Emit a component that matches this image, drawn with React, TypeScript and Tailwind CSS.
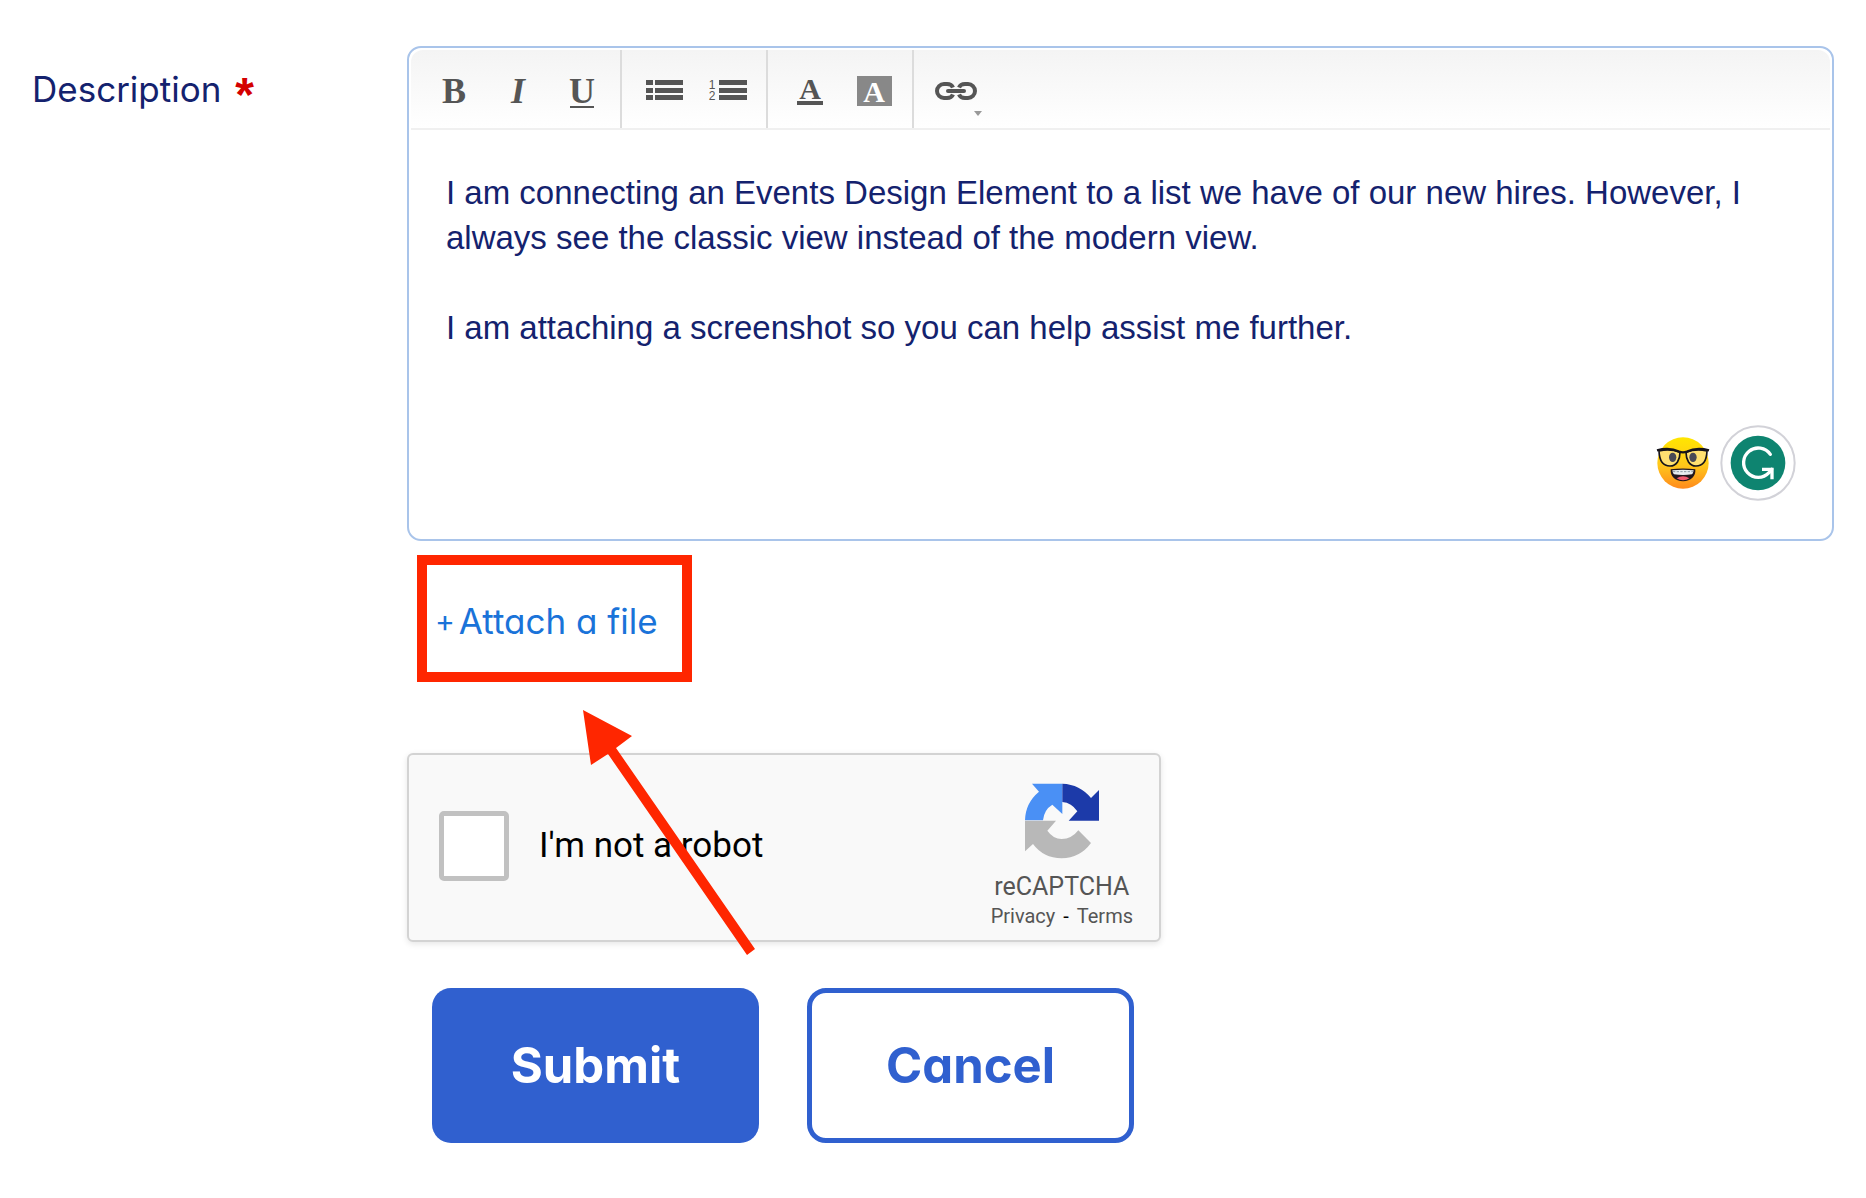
import type { ReactNode } from "react"

const message = `I am connecting an Events Design Element to a list we have of our new hires. However, I always see the classic view instead of the modern view.

I am attaching a screenshot so you can help assist me further.`

function ToolGroup({ children }: { children: ReactNode }) {
  return (
    <div className="flex border-r-2 border-[#dcdcdc] pr-1.5 pl-2.5 last:border-r-0">
      {children}
    </div>
  )
}

function ToolButton({ label, children }: { label: string; children: ReactNode }) {
  return (
    <button
      type="button"
      aria-label={label}
      className="relative flex h-[78px] w-16 items-center justify-center pt-[3px] font-['Liberation_Serif',serif] text-4xl leading-[40px] font-bold text-[#555]"
    >
      {children}
    </button>
  )
}

function Toolbar() {
  return (
    <div className="mx-0.5 mt-0.5 flex rounded-t-xl border-b-2 border-[#f0f0f0] bg-linear-to-b from-[#f4f4f4] to-white pl-px">
      <ToolGroup>
        <ToolButton label="Bold">B</ToolButton>
        <ToolButton label="Italic">
          <span className="italic">I</span>
        </ToolButton>
        <ToolButton label="Underline">
          <span>U</span>
          <svg className="absolute bottom-5" width="24" height="2">
            <rect width="24" height="2" fill="#555" />
          </svg>
        </ToolButton>
      </ToolGroup>
      <ToolGroup>
        <ToolButton label="Bulleted list">
          <svg width="37" height="21" fill="#555">
            <path d="M0 0h7v5H0zM9 0h28v5H9zM0 8h7v5H0zM9 8h28v5H9zM0 15h7v5H0zM9 15h28v5H9z" />
          </svg>
        </ToolButton>
        <ToolButton label="Numbered list">
          <span className="flex items-center gap-1">
            <span className="font-['Liberation_Sans',sans-serif] text-xs leading-[11px] font-normal">
              1<br />2
            </span>
            <svg width="28" height="21" fill="#555">
              <path d="M0 0h28v5H0zM0 8h28v5H0zM0 15h28v5H0z" />
            </svg>
          </span>
        </ToolButton>
      </ToolGroup>
      <ToolGroup>
        <ToolButton label="Text color">
          <span className="border-b-4 border-[#555] px-0.5 text-[30px] leading-[24px]">A</span>
        </ToolButton>
        <ToolButton label="Background color">
          <span className="h-[30px] w-[35px] bg-[#888] text-[30px] leading-[32px] text-white">A</span>
        </ToolButton>
      </ToolGroup>
      <ToolGroup>
        <ToolButton label="Link">
          <svg width="42" height="18" viewBox="0 0 42 18" fill="none" stroke="#555" strokeWidth="4">
            <path d="M18 5.500C17 3 15 2 12 2H9a7 7 0 0 0 0 14h3c3 0 5-1 6-3.500" />
            <path d="M24 5.500C25 3 27 2 30 2h3a7 7 0 0 1 0 14h-3c-3 0-5-1-6-3.500" />
            <path d="M13 9h16" strokeLinecap="round" />
          </svg>
          <svg className="absolute right-1.5 bottom-3" width="8" height="5" fill="#999">
            <path d="M0 0h8L4 5z" />
          </svg>
        </ToolButton>
      </ToolGroup>
    </div>
  )
}

function NerdFace() {
  return (
    <svg width="54" height="54" viewBox="107 107 162 162" aria-hidden="true">
      <defs>
        <linearGradient id="face" x1="0" y1="0" x2="0" y2="1">
          <stop offset="0" stopColor="#ffe600" />
          <stop offset="0.550" stopColor="#ffc61a" />
          <stop offset="1" stopColor="#ff8a1c" />
        </linearGradient>
      </defs>
      <circle cx="188" cy="188" r="77" fill="url(#face)" />
      <path d="M117 152q34-8 62 4c1 22-10 42-30 42-22 0-31-20-32-46z" fill="#ffe070" />
      <path d="M259 152q-34-8-62 4c-1 22 10 42 30 42 22 0 31-20 32-46z" fill="#ffe070" />
      <ellipse cx="157" cy="171" rx="11" ry="14" fill="#4a4a55" />
      <ellipse cx="218" cy="171" rx="11" ry="14" fill="#4a4a55" />
      <g fill="none" stroke="#15131a" strokeWidth="5">
        <path d="M116 152q34-8 63 4c0 22-10 41-30 41-22 0-32-19-33-45z" />
        <path d="M260 152q-34-8-63 4c0 22 10 41 30 41 22 0 32-19 33-45z" />
        <path d="M110 150q38-10 66 4 12 4 24 0 28-14 66-4" strokeWidth="7" />
      </g>
      <path d="M151 207q37-5 74 0c2 20-13 36-37 36s-39-16-37-36z" fill="#23171c" />
      <path d="M156 210q32-4 64 0-1 8-5 12-27 4-54 0-4-4-5-12z" fill="#e9eef0" />
      <path d="M158 214h60" stroke="#8b9aa3" strokeWidth="3" strokeDasharray="7 4" />
      <path d="M169 234q19-12 38 0-8 6-19 6t-19-6z" fill="#f0596f" />
    </svg>
  )
}

function GrammarlyBadge() {
  return (
    <svg width="76" height="76" viewBox="298 73 228 228" aria-hidden="true">
      <circle cx="412" cy="187" r="110" fill="#fff" stroke="#d2d2d8" strokeWidth="6" />
      <circle cx="412" cy="187" r="82" fill="#0e8470" />
      <g fill="none" stroke="#fff" strokeWidth="10">
        <path d="M449 161A44 44 0 1 0 445 216L453 206" strokeLinecap="round" />
        <path d="M424 206h30v30" />
      </g>
    </svg>
  )
}

function RecaptchaLogo() {
  return (
    <svg width="74" height="76" viewBox="195 125 222 228" aria-hidden="true">
      <path
        d="M195 237Q196 185 237 151L216 127H307V218L277 190Q252 205 249 237Z"
        fill="#4a90f5"
      />
      <path
        d="M307 127Q360 129 393 170L417 146V238H326L352 210Q335 184 307 182Z"
        fill="#1c3aa9"
      />
      <path
        d="M195 238H288L262 268Q280 293 305 293Q335 293 355 267L393 305Q360 350 305 351Q250 350 219 308L195 330Z"
        fill="#b8b8b8"
      />
    </svg>
  )
}

function Recaptcha() {
  return (
    <div className="flex h-[189px] w-[754px] items-center rounded-md border-2 border-[#d3d3d3] bg-[#f9f9f9] pr-[26px] pb-1 pl-[30px] font-[Roboto,sans-serif] shadow-[0_2px_6px_rgba(0,0,0,0.10)]">
      <input
        id="robot"
        type="checkbox"
        className="size-[70px] appearance-none rounded-[5px] border-5 border-[#c1c1c1] bg-white"
      />
      <label htmlFor="robot" className="ml-[30px] text-[35px] leading-[42px] text-black">
        I'm not a robot
      </label>
      <div className="ml-auto flex flex-col items-center self-start pt-7 text-[#555]">
        <RecaptchaLogo />
        <div className="mt-3 text-[25px] leading-[32px]">reCAPTCHA</div>
        <div className="flex gap-2 text-[20px] leading-[26px]">
          <a href="#privacy">Privacy</a>
          <span className="text-black">-</span>
          <a href="#terms">Terms</a>
        </div>
      </div>
    </div>
  )
}

export default function App() {
  return (
    <form className="grid grid-cols-[407px_minmax(0,1fr)] bg-white pt-[46px] pr-8 pb-14 font-[Inter,sans-serif] [font-feature-settings:'cv11']">
      <label
        htmlFor="description"
        className="flex gap-3.5 pt-[21px] pl-8 text-[35px] leading-[44px] text-[#14226e]"
      >
        Description
        <span className="pt-1 font-['Liberation_Sans',sans-serif] text-5xl font-bold text-[#d40000]">*</span>
      </label>

      <div>
        {/* Editor */}
        <div className="relative rounded-[14px] border-2 border-[#a9c4ea]">
          <Toolbar />
          <textarea
            id="description"
            defaultValue={message}
            className="block h-[409px] w-full resize-none bg-transparent px-[37px] pt-10 font-['Liberation_Sans',sans-serif] text-[33px] leading-[45px] text-[#14226e] outline-none"
          />
          <div className="absolute right-9 bottom-[38px] flex items-center gap-2.5">
            <NerdFace />
            <GrammarlyBadge />
          </div>
        </div>

        {/* Attachment */}
        <div className="mt-3.5 ml-2.5 flex h-[127px] w-[275px] items-center border-10 border-[#ff2600] pt-1 pl-2">
          <button type="button" className="flex items-center gap-1 text-[35px] leading-[44px] text-[#1a73d9]">
            <span className="text-[30px]">+</span>
            Attach a file
          </button>
        </div>

        <div className="relative mt-[71px]">
          <Recaptcha />
          <svg
            className="pointer-events-none absolute -top-[43px] left-[176px]"
            width="172"
            height="245"
            viewBox="583 709 172 245"
            fill="#ff2600"
            aria-hidden="true"
          >
            <path d="M583 709L632 735L616 747L755 948L747 954L608 753L591 764Z" />
          </svg>
        </div>

        {/* Actions */}
        <div className="mt-[46px] ml-[25px] flex gap-12 text-[49px] leading-[60px] font-bold">
          <button type="submit" className="h-[155px] w-[327px] rounded-[19px] bg-[#3060cf] text-white">
            Submit
          </button>
          <button
            type="button"
            className="h-[155px] w-[327px] rounded-[19px] border-5 border-[#3060cf] bg-white text-[#3060cf]"
          >
            Cancel
          </button>
        </div>
      </div>
    </form>
  )
}
